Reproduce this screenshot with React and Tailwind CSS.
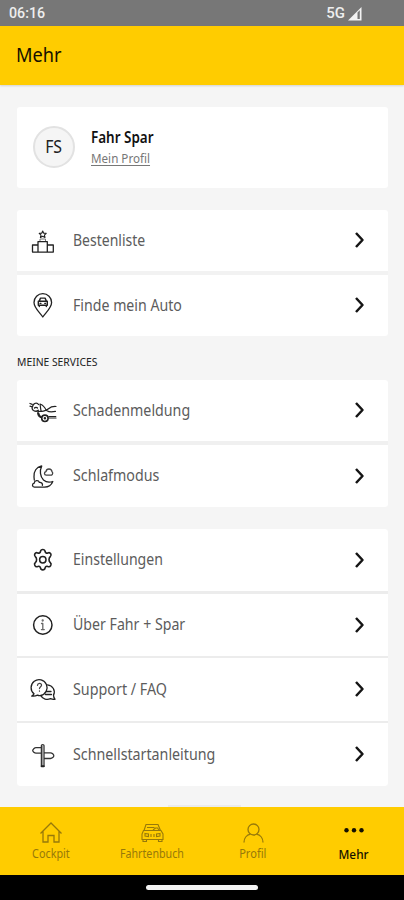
import React from 'react';

const Icon = ({ children }) => (
  <svg
    width="30"
    height="30"
    viewBox="0 0 30 30"
    fill="none"
    stroke="#222"
    strokeWidth="1.3"
    strokeLinecap="round"
    strokeLinejoin="round"
    className="shrink-0"
  >
    {children}
  </svg>
);

const PodiumIcon = () => (
  <Icon>
    <path d="M14.7 5l1 2.2 2.500.2-1.800 1.700.6 2.400-2.300-1.300-2.300 1.300.6-2.400-1.800-1.700 2.500-.2z" strokeWidth="1.1" />
    <path d="M12 15.500v-2.500h5.500v2.500" strokeWidth="1" stroke="#777" />
    <path d="M10 26V15.600h9.300V26M10 19H4.500v7.100h20.800V19h-6" />
  </Icon>
);

const CarPinIcon = () => (
  <Icon>
    <path d="M14.800 26C11.800 21.600 6 16.800 6 11.500a8.800 8.800 0 0 1 17.600 0C23.600 16.800 17.800 21.600 14.800 26z" />
    <path d="M10.300 10.300h9v4h-9zM11.200 10.100l1.300-3h4.600l1.300 3M11.300 14.500v1M18.300 14.500v1" strokeWidth="1.400" />
    <path d="M12 12.300h1M16.700 12.300h1" />
  </Icon>
);

const CrashIcon = () => (
  <Icon>
    <path d="M2 7.500l2.200.8M2 10.200l1.500.4M5.500 8.500c1.500-2 4-1.800 5 0M5 9.500c-1.500 2-1 4 .5 5 1.800 1 4 .6 4.800-.2M6.500 12c.8-1 2.300-.8 3 0" />
    <path d="M12 8l1 7M12.500 8.300c2.500.8 4.500 3.500 5.700 6M10 15.200c3 .8 8-.2 10.500-2.500 2-1.700 4.500-2.400 7.500-2.200M10 16c-.8 2 .5 4.500 2.700 5.500M19 14.800c2.500 1.700 5.500 1.200 8.500.6M20.500 22H28M20.800 20.500h7" strokeWidth="1.200" />
    <path d="M10.500 17.500c.2 1.800 1.200 3 2.600 3.600" strokeWidth="2" />
    <circle cx="16.900" cy="22.300" r="3.200" strokeWidth="1.600" />
    <circle cx="16.900" cy="22.300" r=".6" />
  </Icon>
);

const MoonIcon = () => (
  <Icon>
    <path d="M13.500 5C8.500 6.200 5.500 10.500 6 16l.3 3M13.700 5.200C11.500 9.500 12 15.500 15.500 19c2.600 2.300 6.300 2.600 9.300 1.500-1.300 3.400-4.600 5.600-8.300 5.600h-10c-2.600-.3-2.700-3.500-.3-4 .2-2.800 4.200-3.400 5.200-.7 2.200-.2 3.500 1.500 3 3" />
    <path d="M23.500 14.200h-5.200c-2.400-.2-2.400-3.200-.3-3.600.5-3.600 5.600-3.400 6 .2.900.4 1.100 2.400-.5 3.400z" stroke="#444" />
  </Icon>
);

const GearIcon = () => (
  <Icon>
    <path
      strokeWidth="1.600"
      d="M12.500 6.500c.4-2.600 4.200-2.600 4.600 0 .3 1.500 1.500 2 2.800 1.400 2.400-1 4.300 2.100 2.400 3.800-1 .9-1.300 1.500-1.300 3s.3 2.100 1.300 3c1.900 1.700 0 4.800-2.400 3.800-1.300-.6-2.500-.1-2.800 1.400-.4 2.600-4.200 2.600-4.600 0-.3-1.500-1.500-2-2.800-1.400-2.400 1-4.300-2.100-2.400-3.800 1-.9 1.300-1.500 1.300-3s-.3-2.100-1.300-3c-1.900-1.700 0-4.800 2.400-3.800 1.300.6 2.500.1 2.800-1.400z"
    />
    <circle cx="14.800" cy="14.700" r="3.200" strokeWidth="1.500" />
  </Icon>
);

const InfoIcon = () => (
  <Icon>
    <circle cx="14.800" cy="15" r="9.200" strokeWidth="1.500" />
    <path d="M14.800 13.500v6M13.500 13.500h1.300M13.400 19.600h2.900" stroke="#666" />
    <circle cx="14.700" cy="10.500" r=".5" stroke="#666" />
  </Icon>
);

const SupportIcon = () => (
  <Icon>
    <path d="M6 18.800A8 8 0 1 1 12.500 20.500c-1 .3-2.300 0-3-.4-1.700.9-4 1.200-5.800.9 1.300-.5 2-1.300 2.300-2.200z" />
    <path d="M9.500 10.300c.2-2.600 4.200-2.500 4 0-.1 1.500-2 1.400-2 3.300M11.500 16v.2" strokeWidth="1.300" stroke="#444" />
    <path d="M19.500 9.800c5.300.6 8.300 5.900 6 10.300.1 1.600.4 3 1.500 4.200-1.700.3-3.200 0-4.500-.6-3.600 1.500-7.800.3-9.500-2.800M18.500 16.500h4.500M17.500 19.500h6" />
  </Icon>
);

const SignpostIcon = () => (
  <Icon>
    <path
      d="M13.400 26.300V5.500c0-1.300 2.600-1.300 2.600 0v20.800zM13.300 13.200H8c-1.500 0-3.300-1.700-3.300-2.700S6.500 7.700 8 7.700h5.300M16.100 12.800h6.400c1.500 0 3.300 1.700 3.300 2.900s-1.800 2.800-3.300 2.800h-6.400"
      stroke="#333"
    />
    <path d="M14.700 6v20" stroke="#888" strokeWidth="1" />
    <path d="M13.700 26.200h2" strokeWidth="2" />
  </Icon>
);

const Chevron = () => (
  <svg
    width="12"
    height="18"
    viewBox="0 0 12 18"
    fill="none"
    stroke="#151515"
    strokeWidth="2.500"
    className="mb-px ml-auto"
  >
    <path d="M2 2l6.500 7L2 16" strokeLinejoin="round" />
  </svg>
);

const Row = ({ icon: RowIcon, label, size, scale }) => (
  <div className={`flex items-center bg-white pl-[11px] pr-[22px] ${size}`}>
    <RowIcon />
    <span className={`mb-[2px] ml-[15px] origin-left whitespace-nowrap text-base text-[#5c5c5c] ${scale}`}>
      {label}
    </span>
    <Chevron />
  </div>
);

const Tab = ({ label, scale, color, children }) => (
  <div className={`flex w-[101px] flex-col items-center pt-[14px] ${color}`}>
    <svg width="26" height="24" viewBox="0 0 26 24" fill="none" stroke="currentColor" strokeWidth="1.300">
      {children}
    </svg>
    <span className={`whitespace-nowrap leading-[18px] ${scale}`}>{label}</span>
  </div>
);

export default function App() {
  return (
    <div className="flex h-[900px] w-[404px] flex-col overflow-hidden bg-[#f5f5f5] font-['Noto_Sans',sans-serif]">
      <div className="flex h-[26px] shrink-0 items-center bg-[#777] pl-[9px] pr-[42px] font-['Roboto',sans-serif] text-[14.5px] font-medium text-[#eee]">
        <span className="mt-[2px] origin-left scale-x-[0.980]">06:16</span>
        <span className="ml-auto mt-[1px] text-[15px]">5G</span>
        <svg width="14" height="14" viewBox="0 0 14 14" className="ml-[3px] mt-[1px]">
          <path d="M0 13.500L13.500 0v13.500z" fill="#f3f3f3" />
          <path d="M9.500 5.500l2.300-2.300v8.800H9.500z" fill="#777" />
        </svg>
      </div>

      <header className="flex h-[59px] shrink-0 items-center bg-[#ffcc00] pl-[16px] shadow-[0_1px_2px_rgba(0,0,0,0.15)]">
        <h1 className="mb-[2px] origin-left scale-x-[0.910] text-[20px] text-[#151000]">Mehr</h1>
      </header>

      <main className="flex h-[722px] shrink-0 flex-col pl-[17px] pr-[16px] pt-[22px]">
        <div className="flex h-[81px] items-center rounded-[3px] bg-white pl-[16px]">
          <div className="mb-[2px] flex h-[42px] w-[42px] items-center justify-center rounded-full border-2 border-[#e2e2e2] bg-[#f5f5f5]">
            <span className="mb-px scale-x-[0.880] text-[18px] text-[#222]">FS</span>
          </div>
          <div className="ml-[16px] flex flex-col items-start">
            <span className="origin-left scale-x-[0.840] text-base font-semibold leading-[21px] text-[#111]">Fahr Spar</span>
            <span className="mt-px origin-left scale-x-[0.970] text-[12px] leading-[20px] text-[#777] underline underline-offset-2">
              Mein Profil
            </span>
          </div>
        </div>

        <div className="mt-[22px] flex flex-col gap-[4px] overflow-hidden rounded-[3px] bg-[#f2f2f2]">
          <Row icon={PodiumIcon} label="Bestenliste" size="h-[61px]" scale="scale-x-[0.875]" />
          <Row icon={CarPinIcon} label="Finde mein Auto" size="h-[61px]" scale="scale-x-[0.885]" />
        </div>

        <h2 className="mt-[16px] h-[20px] origin-left scale-x-[0.940] self-start whitespace-nowrap text-[11px] leading-[20px] text-[#222]">
          MEINE SERVICES
        </h2>

        <div className="mt-[8px] flex flex-col gap-[4px] overflow-hidden rounded-[3px] bg-[#f0f0f0]">
          <Row icon={CrashIcon} label="Schadenmeldung" size="h-[61px]" scale="scale-x-[0.890]" />
          <Row icon={MoonIcon} label="Schlafmodus" size="h-[62px]" scale="scale-x-[0.890]" />
        </div>

        <div className="mt-[22px] flex flex-col overflow-hidden rounded-[3px] bg-[#ececec]">
          <Row icon={GearIcon} label="Einstellungen" size="h-[62px]" scale="scale-x-[0.880]" />
          <Row icon={InfoIcon} label="Über Fahr + Spar" size="mt-[3px] h-[62px]" scale="scale-x-[0.885]" />
          <Row icon={SupportIcon} label="Support / FAQ" size="mt-[2px] h-[63px]" scale="scale-x-[0.895]" />
          <Row icon={SignpostIcon} label="Schnellstartanleitung" size="mt-[2px] h-[63px]" scale="scale-x-[0.890]" />
        </div>

        <div className="ml-[151px] mt-auto h-[2px] w-[73px] bg-[#ebebeb]" />
      </main>

      <nav className="flex h-[68px] shrink-0 bg-[#ffcc00]">
        <Tab label="Cockpit" scale="text-[12px] scale-x-[0.900]" color="text-[#97790a]">
          <path d="M2.500 12.500L13 2l10.500 10.500M5 10.500V21h5v-6.500h6V21h5V10.500" />
        </Tab>
        <Tab label="Fahrtenbuch" scale="text-[12px] scale-x-[0.890]" color="text-[#97790a]">
          <path
            strokeWidth="1.100"
            d="M5 9.500L7 3.500h12l2.500 6M4.500 9.500h17.500l2 3.500v5.500H3V13zM4 18.500V20.500h3.500v-2M19.500 18.500v2H23v-2M8 6.500h7.500M14 9l2.500-2h2l1.500 2M6 12.500l3.500.5v2.500L6 15zM21 12.500l-3.500.5v2.500l3.500-.5zM12 13v3M15 13v3"
          />
        </Tab>
        <Tab label="Profil" scale="text-[12px] scale-x-[0.920]" color="text-[#97790a]">
          <circle cx="13.500" cy="8.500" r="5.500" />
          <path d="M4 21.500c0-4 2.500-7.500 6.500-8.300M16.500 13.200c4 .8 6.500 4.300 6.500 8.300" />
        </Tab>
        <Tab label="Mehr" scale="text-[13px] font-medium scale-x-[0.910]" color="text-[#151000]">
          <g fill="currentColor" stroke="none">
            <circle cx="5.500" cy="9.200" r="2.200" />
            <circle cx="13" cy="9.200" r="2.200" />
            <circle cx="20.500" cy="9.200" r="2.200" />
          </g>
        </Tab>
      </nav>

      <div className="flex h-[25px] shrink-0 justify-center bg-black pt-[10px]">
        <div className="h-[5px] w-[112px] rounded-full bg-[#f3f3f3]" />
      </div>
    </div>
  );
}
